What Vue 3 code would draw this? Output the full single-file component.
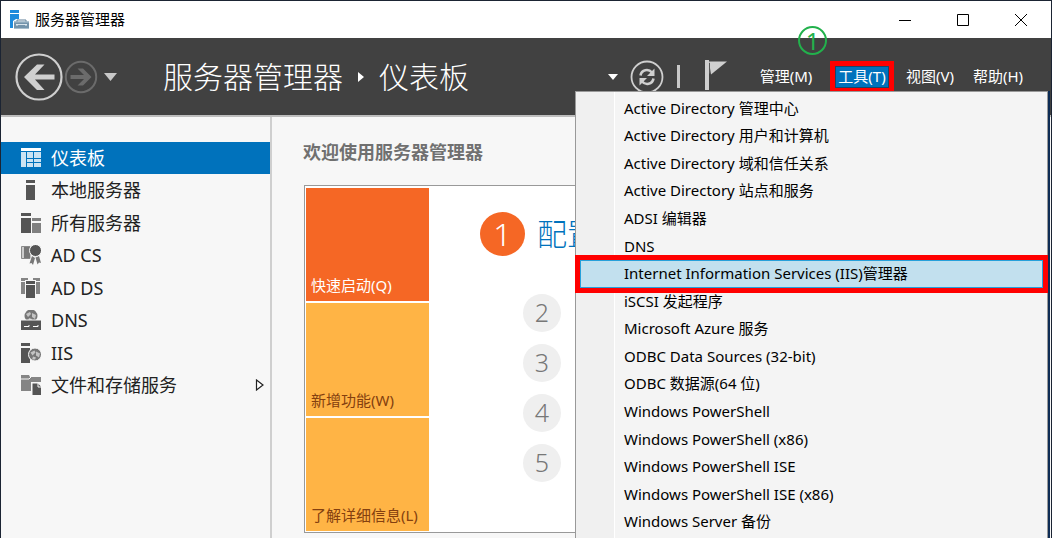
<script setup>
import { ref } from 'vue'

const navItems = [
  { id: 'dash', label: '仪表板' },
  { id: 'local', label: '本地服务器' },
  { id: 'all', label: '所有服务器' },
  { id: 'adcs', label: 'AD CS' },
  { id: 'adds', label: 'AD DS' },
  { id: 'dns', label: 'DNS' },
  { id: 'iis', label: 'IIS' },
  { id: 'files', label: '文件和存储服务', expandable: true },
]
const selected = ref('dash')

const menuBar = [
  { id: 'manage', label: '管理(M)' },
  { id: 'tools', label: '工具(T)' },
  { id: 'view', label: '视图(V)' },
  { id: 'help', label: '帮助(H)' },
]

const tools = [
  'Active Directory 管理中心',
  'Active Directory 用户和计算机',
  'Active Directory 域和信任关系',
  'Active Directory 站点和服务',
  'ADSI 编辑器',
  'DNS',
  'Internet Information Services (IIS)管理器',
  'iSCSI 发起程序',
  'Microsoft Azure 服务',
  'ODBC Data Sources (32-bit)',
  'ODBC 数据源(64 位)',
  'Windows PowerShell',
  'Windows PowerShell (x86)',
  'Windows PowerShell ISE',
  'Windows PowerShell ISE (x86)',
  'Windows Server 备份',
]
const highlighted = 6

const tiles = [
  { label: '快速启动(Q)', hot: true },
  { label: '新增功能(W)' },
  { label: '了解详细信息(L)' },
]
</script>

<template>
  <div class="window">
    <header class="titlebar">
      <svg class="app-icon" viewBox="0 0 20 20" aria-hidden="true">
        <rect x="0" y="0" width="9" height="3" fill="#1e8bdc" />
        <path d="M0 4h9v5H6L3 11v7H0z" fill="#1e8bdc" />
        <path d="M7 12v-2h9v2" fill="none" stroke="#5f7f98" stroke-width="1" />
        <rect x="4" y="11.500" width="15" height="7.500" fill="#7393ab" />
        <path d="M4 12h15M4 18.500h15" stroke="#a9bfce" />
        <path d="M6 14.500h11" stroke="#d8e4ec" />
        <path d="M7 14v2M16 14v2" stroke="#e8f0f5" />
      </svg>
      <span class="app-title">服务器管理器</span>
      <div class="win-buttons">
        <button aria-label="最小化"><svg viewBox="0 0 12 12"><path d="M0 6.500h12" /></svg></button>
        <button aria-label="最大化"><svg viewBox="0 0 12 12"><path d="M.5.5h11v11H.5z" /></svg></button>
        <button aria-label="关闭"><svg viewBox="0 0 12 12"><path d="M0 0l12 12M12 0L0 12" /></svg></button>
      </div>
    </header>

    <div class="toolbar">
      <button class="back" aria-label="后退">
        <svg viewBox="0 0 48 48">
          <circle cx="24" cy="24" r="22.500" fill="none" stroke="#cfcfcf" stroke-width="2.200" />
          <path d="M9 24L22 11.500h7.500L20 21.500h19.500v5H20L29.500 37H22z" fill="#cfcfcf" />
        </svg>
      </button>
      <button class="forward" aria-label="前进">
        <svg viewBox="0 0 34 34">
          <circle cx="17" cy="17" r="15.200" fill="none" stroke="#6b6b6b" stroke-width="2" />
          <path d="M27.500 17L19 8.500h-5.500L20 15H6.500v4H20l-6.500 6.500H19z" fill="#6b6b6b" />
        </svg>
      </button>
      <button class="history" aria-label="历史记录">
        <svg viewBox="0 0 13 8"><path d="M0 0h13L6.500 8z" fill="#c8c8c8" /></svg>
      </button>
      <h1 class="crumbs">
        <span>服务器管理器</span>
        <svg viewBox="0 0 6 10" aria-hidden="true"><path d="M0 0l6 5-6 5z" fill="#fff" /></svg>
        <span>仪表板</span>
      </h1>
      <div class="actions">
        <button class="drop" aria-label="更多">
          <svg viewBox="0 0 10 6"><path d="M0 0h10L5 6z" fill="#fff" /></svg>
        </button>
        <button class="refresh" aria-label="刷新">
          <svg viewBox="0 0 34 34">
            <circle cx="17" cy="17" r="15.500" fill="none" stroke="#cfcfcf" stroke-width="1.800" />
            <path d="M10.500 15.500c1-6 8-7 11.500-3" fill="none" stroke="#cfcfcf" stroke-width="2.600" />
            <path d="M24.500 8.500v7.500H17z" fill="#cfcfcf" />
            <path d="M23.500 18.500c-1 6-8 7-11.500 3" fill="none" stroke="#cfcfcf" stroke-width="2.600" />
            <path d="M9.500 25.500V18H17z" fill="#cfcfcf" />
          </svg>
        </button>
        <span class="bar"></span>
        <button class="flag" aria-label="通知">
          <svg viewBox="0 0 22 30">
            <path d="M0 0h4v30H0z" fill="#cfcfcf" />
            <path d="M4 1.500h18L6 14.500z" fill="#cfcfcf" />
            <path d="M4.500 3v10.500" stroke="#555" />
          </svg>
        </button>
        <nav class="menubar">
          <button v-for="m in menuBar" :key="m.id" :class="m.id">
            {{ m.label }}
          </button>
          <span class="step">1</span>
        </nav>
      </div>
    </div>

    <div class="body">
      <aside class="side">
        <ul>
          <li v-for="n in navItems" :key="n.id">
            <button :class="{ active: selected === n.id }" @click="selected = n.id">
              <svg class="nav-icon" viewBox="0 0 20 20" aria-hidden="true">
                <g v-if="n.id === 'dash'">
                  <path d="M0 0h20v3H0z" fill="#fff" />
                  <path d="M0 4h5v15H0zM6 4h6v6H6zM13 4h7v6h-7zM6 11h6v3H6zM13 11h7v3h-7zM6 15h6v4H6zM13 15h7v4h-7z" fill="#cce3f2" />
                </g>
                <g v-else-if="n.id === 'local'" fill="#555">
                  <path d="M5 0h9v3H5zM5 5h9v15H5z" />
                </g>
                <g v-else-if="n.id === 'all'">
                  <path d="M0 0h10v3H0zM0 5h10v15H0z" fill="#555" />
                  <path d="M11 5h9v3h-9zM11 10h9v10h-9z" fill="#808080" />
                </g>
                <g v-else-if="n.id === 'adcs'">
                  <path d="M.5 1.500H9v12H.5z" fill="#ccc" stroke="#8a8a8a" />
                  <path d="M3 2h6v11H3z" fill="#777" />
                  <path d="M11 11l-2.500 7.500 2-.5 1.500 2 2-7zM18 11l2 7-2-.5-1.500 2-2-7z" fill="#777" />
                  <circle cx="14.500" cy="5.500" r="6" fill="#555" stroke="#f7f7f7" />
                </g>
                <g v-else-if="n.id === 'adds'">
                  <path d="M0 0h7v3H0zM0 4h4v12H0zM12 0h7v3h-7zM15 4h4v12h-4z" fill="#858585" />
                  <path d="M4 2h11v18H4z" fill="#f7f7f7" />
                  <path d="M5 3h9v3H5zM5 7h9v13H5z" fill="#555" />
                </g>
                <g v-else-if="n.id === 'dns'">
                  <circle cx="10" cy="6" r="6.500" fill="#777" />
                  <path d="M5 4l4-2 1 2-3 3zM11 3l4 2-1 4-3-2zM8 8l3 1-1 2H7z" fill="#c4c4c4" />
                  <path d="M0 10h20v10H0z" fill="#555" />
                  <path d="M0 10h20" stroke="#f7f7f7" />
                  <path d="M3 16.500h5V15M12 16.500h5V15" fill="none" stroke="#fff" />
                </g>
                <g v-else-if="n.id === 'iis'">
                  <path d="M0 0h9v3H0z" fill="#555" />
                  <path d="M0 5h9v15H0z" fill="#555" />
                  <circle cx="14" cy="11.500" r="6.500" fill="#777" stroke="#f7f7f7" />
                  <path d="M9.500 9.500l4-2 1 2-3 3zM15 8.500l4 2-1 4-3-2zM12 13.500l3 1-1 2h-3z" fill="#c4c4c4" />
                </g>
                <g v-else>
                  <path d="M0 1V0h8l1 2h11v14H0z" fill="#858585" />
                  <path d="M0 4h8l2-2" fill="none" stroke="#f7f7f7" />
                  <path d="M10 7h11v13H10z" fill="#f7f7f7" />
                  <path d="M11.500 8.500H17l3 3V20h-8.500z" fill="#555" />
                  <path d="M17 8v4h3.500" fill="none" stroke="#f7f7f7" />
                </g>
              </svg>
              <span>{{ n.label }}</span>
              <svg v-if="n.expandable" class="chev" viewBox="0 0 10 12" aria-hidden="true">
                <path d="M1.500 1L8 6l-6.500 5z" fill="#fff" stroke="#222" stroke-width="1.200" />
              </svg>
            </button>
          </li>
        </ul>
      </aside>

      <main class="main">
        <h2>欢迎使用服务器管理器</h2>
        <section class="panel">
          <div class="tiles">
            <button v-for="t in tiles" :key="t.label" :class="{ hot: t.hot }">{{ t.label }}</button>
          </div>
          <div class="steps">
            <a class="first" href="#"><span class="num">1</span>配置</a>
            <span v-for="n in [2, 3, 4, 5]" :key="n" class="num">{{ n }}</span>
          </div>
        </section>
      </main>
    </div>

    <ul class="menu">
      <li v-for="(t, i) in tools" :key="t">
        <button :class="{ hover: i === highlighted }">{{ t }}</button>
      </li>
    </ul>
  </div>
</template>

<style>
body {
  margin: 0;
  overflow: hidden;
}
</style>

<style scoped>
.window {
  position: relative;
  box-sizing: border-box;
  height: 100vh;
  overflow: hidden;
  display: flex;
  flex-direction: column;
  border: 1px solid #1b2433;
  border-bottom: 0;
  background: #f7f7f7;
  font: 15px/20px "Noto Sans", "Noto Sans CJK SC", sans-serif;
  color: #000;
}
button {
  padding: 0;
  border: 0;
  background: none;
  font: inherit;
  color: inherit;
}
svg {
  display: block;
}
ul {
  list-style: none;
  margin: 0;
  padding: 0;
}
.titlebar {
  flex: none;
  display: flex;
  align-items: center;
  height: 37px;
  padding: 0 1px 0 9px;
  background: #fff;
}
.app-icon {
  width: 20px;
  height: 20px;
}
.app-title {
  margin: 0 0 2px 5px;
}
.win-buttons {
  display: flex;
  margin-left: auto;
}
.win-buttons button {
  display: grid;
  place-items: center;
  width: 58px;
  height: 36px;
}
.win-buttons svg {
  width: 12px;
  height: 12px;
  overflow: visible;
  fill: none;
  stroke: #000;
}
.toolbar {
  flex: none;
  display: flex;
  align-items: center;
  height: 77px;
  padding: 0 19px 0 14px;
  background: #414141;
  border-bottom: 2px solid #bdbdbd;
  color: #fff;
}
.back svg {
  width: 48px;
  height: 48px;
}
.forward {
  margin-left: 1px;
}
.forward svg {
  width: 34px;
  height: 34px;
}
.history {
  margin-left: 6px;
}
.history svg {
  width: 13px;
  height: 8px;
}
.crumbs {
  display: flex;
  align-items: center;
  gap: 15px;
  margin: 0 0 0 46px;
  font-size: 30px;
  line-height: 40px;
  font-weight: 300;
  white-space: nowrap;
}
.crumbs svg {
  width: 6px;
  height: 10px;
}
.actions {
  display: flex;
  align-items: center;
  margin-left: auto;
}
.drop svg {
  width: 10px;
  height: 6px;
}
.refresh {
  margin-left: 12px;
}
.refresh svg {
  width: 34px;
  height: 34px;
}
.bar {
  width: 3px;
  height: 23px;
  margin-left: 13px;
  background: #c8c8c8;
}
.flag {
  margin: 0 25px 4px 25px;
}
.flag svg {
  width: 22px;
  height: 30px;
}
.menubar {
  position: relative;
  display: flex;
}
.menubar button {
  width: 68px;
  height: 22px;
  line-height: 18px;
  padding-bottom: 2px;
  white-space: nowrap;
}
.menubar .manage {
  margin-right: 8px;
}
.menubar .tools {
  width: 54px;
  margin: 0 7px;
  background: #0072bc;
  border: 1px solid #17466a;
  outline: 5px solid #f00;
}
.step {
  position: absolute;
  left: 46px;
  top: -40px;
  box-sizing: border-box;
  width: 29px;
  height: 29px;
  border: 2px solid #22b14c;
  border-radius: 50%;
  color: #22b14c;
  font-size: 24px;
  line-height: 25px;
  text-align: center;
}
.body {
  flex: 1;
  display: flex;
  min-height: 0;
}
.side {
  flex: none;
  width: 269px;
  padding-top: 25px;
  border-right: 2px solid #cfcfcf;
}
.side ul {
  display: flex;
  flex-direction: column;
  justify-content: space-between;
  height: 259px;
}
.side button {
  display: flex;
  align-items: center;
  width: 100%;
  height: 32px;
  padding: 0 5px 0 20px;
  font-size: 18px;
  line-height: 24px;
  color: #222;
}
.side .active {
  background: #0072bc;
  color: #fff;
}
.nav-icon {
  width: 20px;
  height: 20px;
  margin-right: 10px;
}
.chev {
  width: 10px;
  height: 12px;
  margin-left: auto;
}
.main {
  flex: 1;
  min-width: 0;
  padding: 22px 20px 0 31px;
}
.main h2 {
  margin: 0 0 20px;
  font-size: 18px;
  line-height: 26px;
  font-weight: 700;
  color: #707070;
}
.panel {
  display: flex;
  padding: 2px 1px 1px;
  margin-left: 1px;
  border: 1px solid #999;
  background: #fff;
}
.tiles {
  display: flex;
  flex-direction: column;
  gap: 2px;
}
.tiles button {
  display: flex;
  align-items: flex-end;
  width: 123px;
  height: 113px;
  padding: 0 5px 6px;
  background: #ffb445;
  color: #84400f;
  white-space: nowrap;
}
.tiles .hot {
  background: #f56725;
  color: #fff;
}
.steps {
  display: flex;
  flex-direction: column;
  gap: 12px;
  padding: 24px 0 0 51px;
}
.num {
  flex: none;
  width: 38px;
  height: 38px;
  margin-left: 43px;
  border-radius: 50%;
  background: #efefef;
  color: #777;
  font-size: 25px;
  line-height: 37px;
  font-weight: 300;
  text-align: center;
}
.first {
  display: flex;
  align-items: center;
  gap: 12px;
  margin-bottom: 26px;
  color: #0072bc;
  font-size: 30px;
  line-height: 44px;
  font-weight: 300;
  text-decoration: none;
  white-space: nowrap;
}
.first .num {
  width: 45px;
  height: 44px;
  margin: 0;
  background: #f56725;
  color: #fff;
  font-size: 32px;
  line-height: 43px;
}
.menu {
  position: absolute;
  top: 90px;
  right: 3px;
  box-sizing: border-box;
  width: 473px;
  padding: 3px 4px;
  display: grid;
  grid-auto-rows: 1fr;
  height: 448px;
  border: 1px solid #999;
  border-bottom: 0;
  background: linear-gradient(90deg, #f0f0f0 38px, #fff 38px, #fff 39px, #f4f4f4 39px);
  box-shadow: 2px 0 0 #0d2c54;
}
.menu button {
  box-sizing: border-box;
  display: flex;
  align-items: center;
  width: 100%;
  height: 100%;
  padding: 0 0 2px 44px;
  white-space: nowrap;
}
.menu .hover {
  padding-left: 43px;
  border: 1px solid #26a0da;
  background: #c2e0ee;
  outline: 5px solid #f00;
}
</style>
